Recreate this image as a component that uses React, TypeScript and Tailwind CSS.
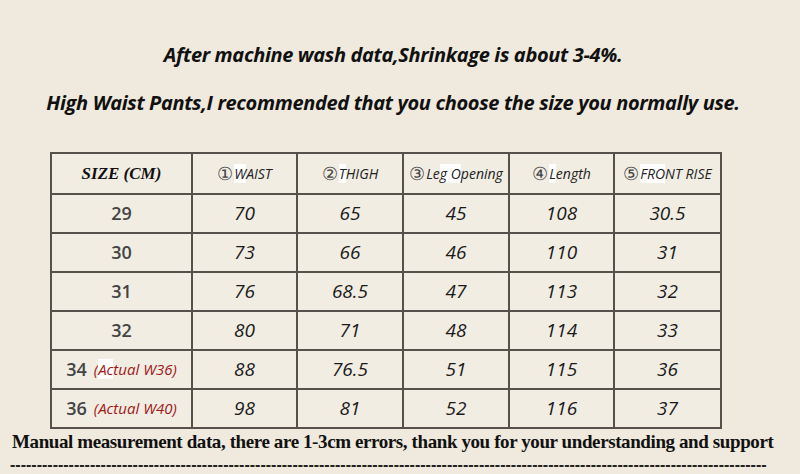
const headers = [
  { num: '①', label: 'WAIST', hi: [0, 1] },
  { num: '②', label: 'THIGH', hi: [0, 1] },
  { num: '③', label: 'Leg Opening', hi: [2, 5] },
  { num: '④', label: 'Length', hi: [0, 1] },
  { num: '⑤', label: 'FRONT RISE', hi: [0, 3] },
];

const rows = [
  { size: '29', note: '', vals: ['70', '65', '45', '108', '30.5'] },
  { size: '30', note: '', vals: ['73', '66', '46', '110', '31'] },
  { size: '31', note: '', vals: ['76', '68.5', '47', '113', '32'] },
  { size: '32', note: '', vals: ['80', '71', '48', '114', '33'] },
  { size: '34', note: '(Actual W36)', vals: ['88', '76.5', '51', '115', '36'] },
  { size: '36', note: '(Actual W40)', vals: ['98', '81', '52', '116', '37'] },
];

const sans = { fontFamily: '"Open Sans", "Noto Sans", sans-serif' };
const serif = { fontFamily: '"Liberation Serif", "DejaVu Serif", serif' };

function HeaderLabel({ label, hi }: { label: string; hi: number[] }) {
  // small white patches from the original scan sit behind a few letters
  const a = label.slice(0, hi[0]);
  const b = label.slice(hi[0], hi[1]);
  const c = label.slice(hi[1]);
  return (
    <span>
      {a}
      <span className="bg-white">{b}</span>
      {c}
    </span>
  );
}

export default function App() {
  return (
    <div className="w-[800px] h-[474px] bg-[#efeadd] overflow-hidden flex flex-col items-center" style={sans}>
      <div className="mt-[41px] ml-[-14px] h-[28px] leading-[28px] text-[20px] font-bold italic text-[#111] tracking-[-0.35px]">
        After machine wash data,Shrinkage is about 3-4%.
      </div>
      <div className="mt-[20px] ml-[-14px] h-[28px] leading-[28px] text-[20px] font-bold italic text-[#111] tracking-[-0.35px]">
        High Waist Pants,I recommended that you choose the size you normally use.
      </div>

      <div className="mt-[35px] ml-[-28px] grid grid-cols-[139px_103px_104px_104px_103px_105px] auto-rows-[37px] grid-rows-[39px] gap-[2px] p-[2px] bg-[#55524c]">
        <div className="bg-[#f1ede3] flex items-center justify-center text-[17px] font-bold italic text-[#111]" style={serif}>
          SIZE (CM)
        </div>
        {headers.map(h => (
          <div key={h.num} className="bg-[#f1ede3] flex items-center justify-center text-[14px] italic text-[#222]">
            <span className="not-italic text-[18px] text-[#444] mr-[1px]">{h.num}</span>
            <HeaderLabel label={h.label} hi={h.hi} />
          </div>
        ))}
        {rows.map(r => (
          <>
            <div key={r.size} className="bg-[#f1ede3] flex items-center justify-center gap-[7px]">
              <span className="text-[18px] font-semibold text-[#444]">{r.size}</span>
              {r.note && (
                <span className="text-[15px] italic text-[#a01818]">
                  (<span className={r.size === '34' ? 'bg-white' : ''}>Ac</span>tual {r.note.slice(8)}
                </span>
              )}
            </div>
            {r.vals.map((v, i) => (
              <div key={r.size + i} className="bg-[#f1ede3] flex items-center justify-center text-[19px] italic text-[#1a1a1a]">
                {v}
              </div>
            ))}
          </>
        ))}
      </div>

      <div className="mt-[2px] self-start ml-[12px] h-[22px] leading-[22px] text-[19px] font-bold text-[#111] tracking-[-0.4px] whitespace-nowrap" style={serif}>
        Manual measurement data, there are 1-3cm errors, thank you for your understanding and support
      </div>
      <div className="self-start ml-[10px] whitespace-nowrap h-[20px] pt-[3px] leading-[17px] text-[16px] font-bold text-[#222]" style={{ fontFamily: '"Liberation Sans", Arial, sans-serif' }}>
        {'-'.repeat(142)}
      </div>
    </div>
  );
}
